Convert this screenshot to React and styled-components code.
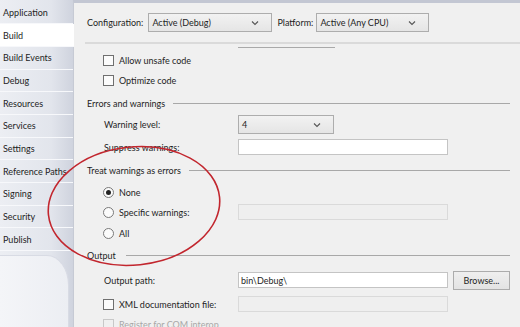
import React from "react";
import styled, { createGlobalStyle } from "styled-components";

const Global = createGlobalStyle`
  html, body { margin: 0; padding: 0; background: #f0f0f0; }
  body { font-family: Lato, "Open Sans", sans-serif; font-size: 9px; color: #1e1e1e; }
`;

const tabs = [
  "Application", "Build", "Build Events", "Debug", "Resources", "Services",
  "Settings", "Reference Paths", "Signing", "Security", "Publish",
];

const Chevron = () => (
  <svg width="8" height="6" viewBox="0 0 8 6">
    <polyline points="1,1.5 4,4.5 7,1.5" fill="none" stroke="#555" strokeWidth="1.1" />
  </svg>
);

const Combo = ({ value, width, shift }) => (
  <Select $width={width} $shift={shift}>
    <span>{value}</span>
    <Chevron />
  </Select>
);

const Heading = ({ children, lineFrom, h = 22, top = 0 }) => (
  <HeadRow $h={h} $top={top}>
    <HeadText>{children}</HeadText>
    <HeadLine $from={lineFrom} />
  </HeadRow>
);

export default function App() {
  return (
    <Page>
      <Global />
      <Sidebar>
        <TabList>
          {tabs.map(t => (
            <Tab key={t} $active={t === "Build"}>{t}</Tab>
          ))}
        </TabList>
        <Filler />
      </Sidebar>
      <Main>
        <Header>
          <Label>Configuration:</Label>
          <Combo value="Active (Debug)" width={124} />
          <Label>Platform:</Label>
          <Combo value="Active (Any CPU)" width={113} shift={-2} />
        </Header>
        <Separator />
        <Body>
          <Row $h={6}>
            <Stub />
          </Row>
          <Row $h={20} $indent={16}>
            <Check /> <span>Allow unsafe code</span>
          </Row>
          <Row $h={20} $indent={16}>
            <Check /> <span>Optimize code</span>
          </Row>
          <Heading lineFrom={8} top={2}>Errors and warnings</Heading>
          <FieldRow $h={21}>
            <FieldLabel>Warning level:</FieldLabel>
            <Combo value="4" width={96} />
          </FieldRow>
          <FieldRow $h={24}>
            <FieldLabel>Suppress warnings:</FieldLabel>
            <TextBox />
          </FieldRow>
          <Heading lineFrom={8} h={23}>Treat warnings as errors</Heading>
          <Row $h={20} $indent={16}>
            <Radio $checked /> <span>None</span>
          </Row>
          <FieldRow $h={20} $indent={16}>
            <FieldLabel $w={135}>
              <Radio /> <span>Specific warnings:</span>
            </FieldLabel>
            <TextBox $disabled />
          </FieldRow>
          <Row $h={22} $indent={16}>
            <Radio /> <span>All</span>
          </Row>
          <Heading lineFrom={10}>Output</Heading>
          <FieldRow $h={28}>
            <FieldLabel>Output path:</FieldLabel>
            <TextBox>bin\Debug\</TextBox>
            <Button>Browse...</Button>
          </FieldRow>
          <FieldRow $h={20} $indent={16}>
            <FieldLabel $w={135}>
              <Check /> <span>XML documentation file:</span>
            </FieldLabel>
            <TextBox $disabled />
          </FieldRow>
          <Row $h={20} $indent={16} $muted>
            <Check $disabled /> <span>Register for COM interop</span>
          </Row>
        </Body>
      </Main>
      <Mark width="520" height="327" viewBox="0 0 520 327">
        <ellipse cx="134" cy="206" rx="86" ry="59" transform="rotate(-6 134 206)"
          fill="none" stroke="#c2262e" strokeWidth="1.6" />
      </Mark>
    </Page>
  );
}

const Page = styled.div`
  position: relative;
  display: flex;
  width: 520px;
  height: 327px;
  overflow: hidden;
`;

const Sidebar = styled.div`
  width: 73px;
  flex-shrink: 0;
  display: flex;
  flex-direction: column;
  background: linear-gradient(to right, #eceef3 0%, #e2e5ec 70%, #cfd3de 100%);
  padding-top: 1.6px;
`;

const TabList = styled.div`
  display: flex;
  flex-direction: column;
  flex-shrink: 0;
`;

const Tab = styled.div`
  height: 22.7px;
  flex-shrink: 0;
  box-sizing: border-box;
  display: flex;
  align-items: center;
  padding-left: 3px;
  white-space: nowrap;
  border-bottom: 1px solid #f7f8fb;
  background: ${p => (p.$active ? "#ffffff" : "transparent")};
  margin-right: ${p => (p.$active ? "-1px" : "0")};
  position: relative;
`;

const Filler = styled.div`
  flex: 1;
  margin-top: 4px;
  margin-right: 4px;
  background: linear-gradient(to right, #f4f5f8, #eceef3);
  border-top: 1px solid #d8dbe4;
  border-right: 1px solid #d8dbe4;
  border-top-right-radius: 22px 30px;
`;

const Main = styled.div`
  flex: 1;
  display: flex;
  flex-direction: column;
  background: #f0f0f0;
  border-top: 3px solid #c3c7d3;
  border-left: 1px solid #c6cad4;
`;

const Header = styled.div`
  height: 39px;
  flex-shrink: 0;
  box-sizing: border-box;
  display: flex;
  align-items: center;
  padding: 0 0 0 13px;
  gap: 5px;
`;

const Label = styled.span`
  white-space: nowrap;
`;

const Select = styled.div`
  width: ${p => p.$width}px;
  height: 19px;
  flex-shrink: 0;
  margin-left: ${p => p.$shift || 0}px;
  box-sizing: border-box;
  display: flex;
  align-items: center;
  justify-content: space-between;
  padding: 0 12px 0 3px;
  border: 1px solid #adadad;
  background: linear-gradient(#f2f2f2, #e5e5e5);
`;

const Separator = styled.div`
  height: 2px;
  flex-shrink: 0;
  margin-left: 11px;
  background: #dadada;
`;

const Body = styled.div`
  display: flex;
  flex-direction: column;
  padding-left: 13px;
`;

const Row = styled.div`
  height: ${p => p.$h}px;
  flex-shrink: 0;
  display: flex;
  align-items: center;
  padding-left: ${p => p.$indent || 0}px;
  gap: 3px;
  white-space: nowrap;
  color: ${p => (p.$muted ? "#a8a8a8" : "inherit")};
`;

const Stub = styled.div`
  margin-left: 151px;
  width: 97px;
  height: 1px;
  background: #a9a9a9;
`;

const FieldRow = styled.div`
  height: ${p => p.$h}px;
  flex-shrink: 0;
  display: flex;
  align-items: center;
  padding-left: ${p => (p.$indent ? p.$indent : 17)}px;
  white-space: nowrap;
`;

const FieldLabel = styled.div`
  width: ${p => p.$w || 134}px;
  flex-shrink: 0;
  display: flex;
  align-items: center;
  gap: 3px;
`;

const TextBox = styled.div`
  width: 210px;
  height: 16px;
  flex-shrink: 0;
  box-sizing: border-box;
  display: flex;
  align-items: center;
  padding-left: 2px;
  border: 1px solid ${p => (p.$disabled ? "#dadada" : "#c4c4c4")};
  background: ${p => (p.$disabled ? "#efefef" : "#ffffff")};
`;

const Button = styled.div`
  margin-left: 5px;
  width: 57px;
  height: 19px;
  flex-shrink: 0;
  box-sizing: border-box;
  display: flex;
  align-items: center;
  justify-content: center;
  border: 1px solid #acacac;
  background: linear-gradient(#efefef, #e3e3e3);
`;

const Check = styled.span`
  width: 11px;
  height: 11px;
  flex-shrink: 0;
  box-sizing: border-box;
  border: 1px solid ${p => (p.$disabled ? "#c8c8c8" : "#6f6f6f")};
  background: ${p => (p.$disabled ? "#f0f0f0" : "#fbfbfb")};
  margin-right: 2px;
`;

const Radio = styled.span`
  width: 11px;
  height: 11px;
  flex-shrink: 0;
  box-sizing: border-box;
  border-radius: 50%;
  border: 1px solid #7a7a7a;
  background: #fbfbfb;
  display: inline-flex;
  align-items: center;
  justify-content: center;
  margin-right: 2px;
  &::after {
    content: "";
    width: 5px;
    height: 5px;
    border-radius: 50%;
    background: ${p => (p.$checked ? "#222" : "transparent")};
  }
`;

const HeadRow = styled.div`
  height: ${p => p.$h}px;
  margin-top: ${p => p.$top}px;
  flex-shrink: 0;
  display: flex;
  align-items: center;
  margin-right: 10px;
`;

const HeadText = styled.span`
  white-space: nowrap;
`;

const HeadLine = styled.div`
  flex: 1;
  height: 1px;
  margin-left: ${p => p.$from}px;
  background: #a8a8a8;
`;

const Mark = styled.svg`
  position: absolute;
  left: 0;
  top: 0;
  pointer-events: none;
`;
